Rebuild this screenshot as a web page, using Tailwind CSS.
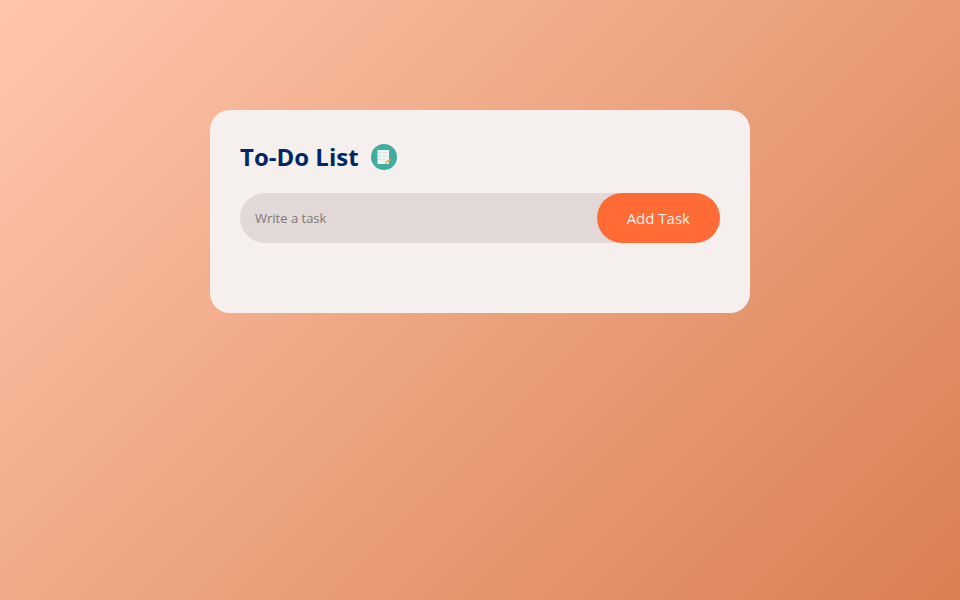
<!DOCTYPE html>
<html lang="en">
<head>
<meta charset="utf-8">
<meta name="viewport" content="width=device-width, initial-scale=1">
<title>To-Do List</title>
<script src="https://cdn.jsdelivr.net/npm/@tailwindcss/browser@4"></script>
</head>
<body class="min-h-screen bg-[linear-gradient(135deg,#ffc6ac,#d97f52)] p-2.5 font-['Open_Sans',sans-serif]">
<main class="mx-auto mt-[100px] w-full max-w-[540px] rounded-[20px] bg-[#f5f0ee] px-[30px] pt-[30px] pb-[70px]">
  <h1 class="mb-5 flex items-center text-2xl leading-[33px] font-bold text-[#002765]">
    To-Do List
    <svg class="ml-3 size-[26px]" viewBox="0 0 26 26" aria-hidden="true">
      <circle cx="13" cy="13" r="13" fill="#3fae9f"/>
      <path d="M6.500 6H18v14H6.500z" fill="#eef5f4"/>
      <g fill="none" stroke="#8fc5bd" stroke-width=".7">
        <path d="m7.500 8.500.7.700 1.300-1.500M7.500 12l.7.700 1.300-1.500M7.500 15.500l.7.700 1.300-1.500"/>
        <path d="M11 8.700h5.500M11 12.200h5.500M11 15.700h3" stroke="#c6dbd8"/>
      </g>
      <path d="m13.500 20 .7-2.200 4.200-3.300 1.400 1.600-4.200 3.300z" fill="#eeb65c"/>
      <path d="m18.400 14.500.8-.6 1.400 1.500-.8.700z" fill="#e0705a"/>
      <path d="m13.500 20 .7-2.200 1.400 1.600z" fill="#f7dfbd"/>
    </svg>
  </h1>
  <form class="flex items-center rounded-full bg-[#e1d8d7] pl-[15px]">
    <input type="text" aria-label="Task" placeholder="Write a task" class="h-[50px] min-w-0 flex-1 bg-transparent text-[13px] text-[#333333] outline-none placeholder:text-[#807775]">
    <button type="button" class="h-[50px] rounded-full bg-[#ff6b35] px-[30px] text-[15px] text-[#f5f0ee]">Add Task</button>
  </form>
</main>
</body>
</html>
